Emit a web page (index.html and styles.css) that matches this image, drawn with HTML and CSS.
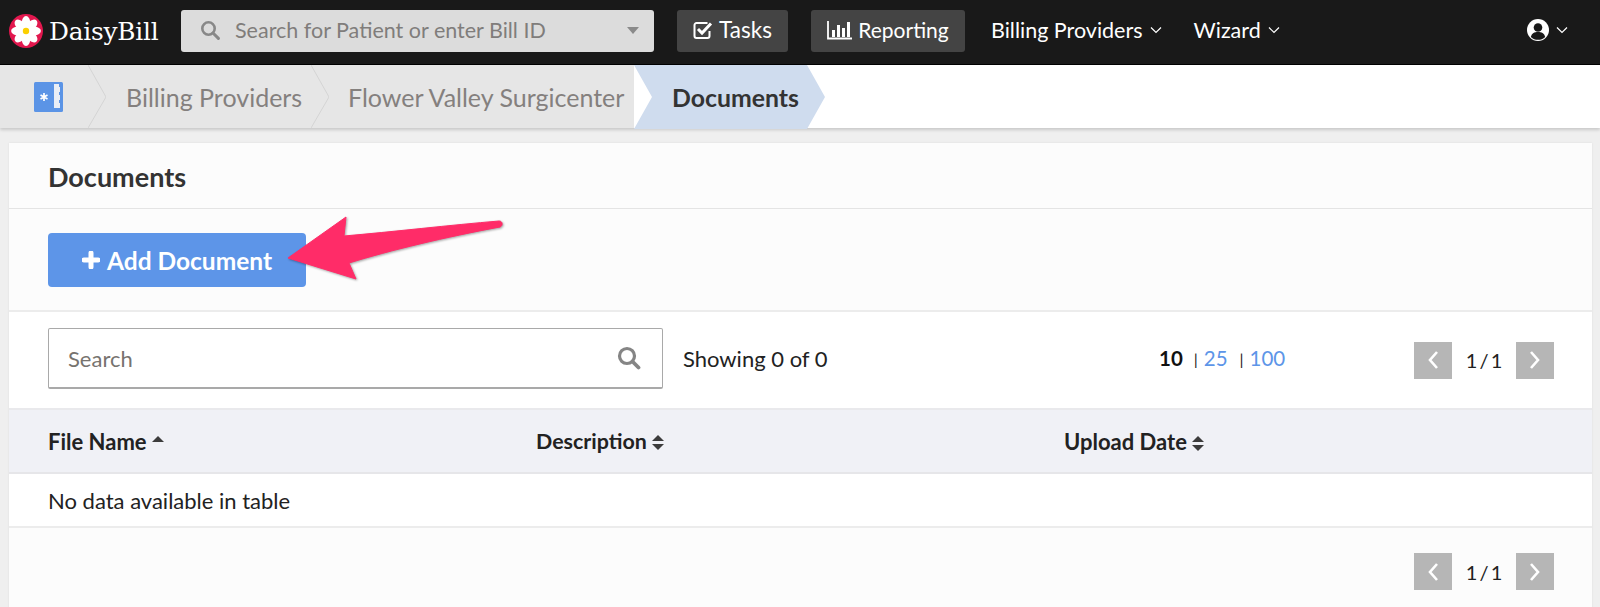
FILE: index.html
```html
<!DOCTYPE html>
<html lang="en">
<head>
    <meta charset="UTF-8">
    <meta name="viewport" content="width=device-width, initial-scale=1.0">
    <title>DaisyBill - Documents</title>
    <link rel="stylesheet" href="styles.css">
</head>
<body>
    <nav class="navbar">
        <a class="brand">
            <svg class="brand-logo" viewBox="0 0 34 34" width="34" height="34">
                <circle cx="17" cy="17" r="17" fill="#e2174e"/>
                <g fill="#fff">
                    <ellipse cx="17" cy="8.5" rx="4.2" ry="6.4"/>
                    <ellipse cx="17" cy="8.5" rx="4.2" ry="6.4" transform="rotate(45 17 17)"/>
                    <ellipse cx="17" cy="8.5" rx="4.2" ry="6.4" transform="rotate(90 17 17)"/>
                    <ellipse cx="17" cy="8.5" rx="4.2" ry="6.4" transform="rotate(135 17 17)"/>
                    <ellipse cx="17" cy="8.5" rx="4.2" ry="6.4" transform="rotate(180 17 17)"/>
                    <ellipse cx="17" cy="8.5" rx="4.2" ry="6.4" transform="rotate(225 17 17)"/>
                    <ellipse cx="17" cy="8.5" rx="4.2" ry="6.4" transform="rotate(270 17 17)"/>
                    <ellipse cx="17" cy="8.5" rx="4.2" ry="6.4" transform="rotate(315 17 17)"/>
                </g>
                <circle cx="17" cy="17" r="3.2" fill="#fbd000"/>
            </svg>
            <span class="brand-name">DaisyBill</span>
        </a>
        <div class="nav-search">
            <svg class="nav-search-icon" viewBox="0 0 20 20" width="20" height="20">
                <circle cx="8.5" cy="8.5" r="6.2" fill="none" stroke="#888" stroke-width="2.6"/>
                <path d="M13 13l5.4 5.4" stroke="#888" stroke-width="3" stroke-linecap="round"/>
            </svg>
            <span class="nav-search-text">Search for Patient or enter Bill ID</span>
            <span class="nav-search-caret"></span>
        </div>
        <a class="nav-btn nav-btn-tasks">
            <svg viewBox="0 0 20 20" width="20" height="20">
                <path d="M16.500 11v5a2 2 0 0 1-2 2h-11a2 2 0 0 1-2-2V5a2 2 0 0 1 2-2h11" fill="none" stroke="#fff" stroke-width="2"/>
                <path d="M5 9l4 4L18 3.500" fill="none" stroke="#fff" stroke-width="3"/>
            </svg>
            Tasks
        </a>
        <a class="nav-btn nav-btn-reporting">
            <svg viewBox="0 0 25 20" width="25" height="20">
                <path d="M1 1v17.500h24" fill="none" stroke="#fff" stroke-width="1.800"/>
                <path d="M5 10h3v7H5zM10 5h3v12h-3zM15 8h3v9h-3zM20 2h3v15h-3z" fill="#fff"/>
            </svg>
            Reporting
        </a>
        <a class="nav-link nav-link-providers">Billing Providers
            <svg class="chev" viewBox="0 0 12 8" width="12" height="8"><path d="M1 1.500l5 5 5-5" fill="none" stroke="#fff" stroke-width="1.200"/></svg>
        </a>
        <a class="nav-link">Wizard
            <svg class="chev" viewBox="0 0 12 8" width="12" height="8"><path d="M1 1.500l5 5 5-5" fill="none" stroke="#fff" stroke-width="1.200"/></svg>
        </a>
        <a class="nav-user">
            <svg viewBox="0 0 22 22" width="22" height="22">
                <circle cx="11" cy="11" r="11" fill="#fff"/>
                <circle cx="11" cy="8.500" r="4.300" fill="#191919"/>
                <path d="M3.800 18c1-4 3.600-5 7.200-5s6.200 1 7.200 5c-2 2-4.500 2.800-7.200 2.800S5.800 20 3.800 18z" fill="#191919"/>
            </svg>
            <svg class="chev" viewBox="0 0 12 8" width="12" height="8"><path d="M1 1.500l5 5 5-5" fill="none" stroke="#fff" stroke-width="1.200"/></svg>
        </a>
    </nav>

    <div class="crumbs">
        <div class="crumb-trail">
            <a class="crumb-home">
                <svg viewBox="0 0 29 30" width="29" height="30">
                    <rect width="29" height="30" rx="1.500" fill="#5b94e6"/>
                    <path d="M20 2h5v3h1v5h-1v3h1v5h-1v3h1v5h-6z" fill="#e9eef6"/>
                    <path d="M10 11v8M6.500 13l7 4M13.500 13l-7 4" stroke="#fff" stroke-width="1.700"/>
                </svg>
            </a>
            <svg class="crumb-sep" viewBox="0 0 18 63" width="18" height="63"><path d="M0 0l18 32L0 63" fill="none" stroke="#d4d4d4"/></svg>
            <a class="crumb crumb-providers">Billing Providers</a>
            <svg class="crumb-sep" viewBox="0 0 18 63" width="18" height="63"><path d="M0 0l18 32L0 63" fill="none" stroke="#d4d4d4"/></svg>
            <a class="crumb crumb-center">Flower Valley Surgicenter</a>
        </div>
        <a class="crumb-current">Documents</a>
    </div>

    <main class="card">
        <h2 class="card-title">Documents</h2>
        <div class="card-actions">
            <button class="add-btn">
                <svg viewBox="0 0 18 18" width="18" height="18"><path d="M9 2v14M2 9h14" stroke="#fff" stroke-width="5" stroke-linecap="round"/></svg>
                Add Document
            </button>
        </div>
        <div class="table-tools">
            <div class="table-search">
                <span class="table-search-text">Search</span>
                <svg viewBox="0 0 24 24" width="24" height="24">
                    <circle cx="10" cy="10" r="7.500" fill="none" stroke="#858585" stroke-width="3.200"/>
                    <path d="M15.500 15.500l6 6" stroke="#858585" stroke-width="3.800" stroke-linecap="round"/>
                </svg>
            </div>
            <div class="table-count">Showing 0 of 0</div>
            <div class="page-sizes">
                <b>10</b><i class="first">|</i><a>25</a><i>|</i><a>100</a>
            </div>
            <div class="pager">
                <span class="pager-btn"><svg viewBox="0 0 12 20" width="12" height="20"><path d="M10 2l-7 8 7 8" fill="none" stroke="#fff" stroke-width="2.600"/></svg></span>
                <span class="pager-text">1 / 1</span>
                <span class="pager-btn"><svg viewBox="0 0 12 20" width="12" height="20"><path d="M2 2l7 8-7 8" fill="none" stroke="#fff" stroke-width="2.600"/></svg></span>
            </div>
        </div>
        <table class="doc-table">
            <thead>
                <tr>
                    <th class="col-file">File Name <span class="sort-up"></span></th>
                    <th class="col-desc">Description <span class="sort-both"></span></th>
                    <th>Upload Date <span class="sort-both"></span></th>
                </tr>
            </thead>
            <tbody>
                <tr><td colspan="3">No data available in table</td></tr>
            </tbody>
        </table>
        <div class="table-foot">
            <div class="pager">
                <span class="pager-btn"><svg viewBox="0 0 12 20" width="12" height="20"><path d="M10 2l-7 8 7 8" fill="none" stroke="#fff" stroke-width="2.600"/></svg></span>
                <span class="pager-text">1 / 1</span>
                <span class="pager-btn"><svg viewBox="0 0 12 20" width="12" height="20"><path d="M2 2l7 8-7 8" fill="none" stroke="#fff" stroke-width="2.600"/></svg></span>
            </div>
        </div>
    </main>

    <!-- annotation arrow drawn on top of the screenshot -->
    <svg class="arrow" viewBox="0 0 230 70" width="230" height="70">
        <path d="M7 44L65 3L63 22C110 18 170 11 218 7C222 7 222 12 219 13C165 23 110 36 68 49L75 65z" fill="#ff2c68" stroke="#ff2c68" stroke-width="1" stroke-linejoin="round"/>
    </svg>
</body>
</html>
```

FILE: styles.css
```css
* {
    margin: 0;
    padding: 0;
    box-sizing: border-box;
}

html, body {
    height: 100%;
    overflow: hidden;
}

body {
    position: relative;
    font-family: 'Lato', sans-serif;
    font-size: 21.500px;
    color: #222;
    background: #efefef;
}

/* Top bar */
.navbar {
    display: flex;
    align-items: center;
    height: 65px;
    background: #191919;
    border-bottom: 1px solid #000;
    color: #fff;
}

.brand {
    display: flex;
    align-items: center;
    width: 181px;
    padding-left: 9px;
    margin-bottom: 2px;
}

.brand-logo {
    flex: none;
}

.brand-name {
    margin-left: 6px;
    font-family: 'DejaVu Serif', serif;
    font-size: 24.800px;
    letter-spacing: -0.200px;
}

.nav-search {
    display: flex;
    align-items: center;
    width: 473px;
    height: 42px;
    margin-bottom: 2px;
    padding: 0 15px 2px 19px;
    border-radius: 3px;
    background: #dcdcdc;
    color: #807d7b;
}

.nav-search-text {
    margin-left: 15px;
    flex: 1;
}

.nav-search-caret {
    border-top: 7px solid #8a8a8a;
    border-left: 6.500px solid transparent;
    border-right: 6.500px solid transparent;
}

.nav-btn {
    display: flex;
    align-items: center;
    justify-content: center;
    gap: 6px;
    height: 42px;
    margin-bottom: 3px;
    padding-bottom: 2px;
    border-radius: 3px;
    background: #444;
}

.nav-btn-tasks {
    width: 111px;
    margin-left: 23px;
    font-size: 22.500px;
}

.nav-btn-reporting {
    width: 154px;
    margin-left: 23px;
    font-size: 21px;
}

.nav-link {
    display: flex;
    align-items: center;
    gap: 7px;
    margin-left: 26px;
    padding-bottom: 4px;
}

.nav-link-providers + .nav-link {
    margin-left: 32px;
}

.nav-user {
    display: flex;
    align-items: center;
    gap: 7px;
    margin-left: auto;
    margin-right: 32px;
    padding-bottom: 4px;
}

/* Breadcrumbs */
.crumbs {
    display: flex;
    height: 63px;
    background: #fff;
    box-shadow: 0 2px 3px rgba(0, 0, 0, 0.16);
}

.crumb-trail {
    display: flex;
    align-items: center;
    width: 634px;
    background: #e6e6e6;
    color: #84807e;
}

.crumb-home {
    display: flex;
    width: 88px;
    padding-left: 34px;
}

.crumb {
    font-size: 25px;
}

.crumb-providers {
    width: 205px;
    padding-left: 20px;
}

.crumb-center {
    padding-left: 19px;
}

.crumb-current {
    display: flex;
    align-items: center;
    width: 191px;
    height: 64px;
    padding-left: 38px;
    font-size: 24.800px;
    font-weight: 700;
    color: #333;
    background: #cfdcee;
    clip-path: polygon(0 0, 173px 0, 100% 50%, 173px 100%, 0 100%, 18px 50%);
}

/* Card */
.card {
    margin: 15px 8px 0 9px;
    height: 480px;
    background: #fcfcfc;
    box-shadow: 0 0 2px rgba(0, 0, 0, 0.08);
}

.card-title {
    height: 66px;
    padding: 17px 39px 0;
    font-size: 27px;
    font-weight: 700;
    color: #333;
    border-bottom: 1px solid #e4e4e4;
}

.card-actions {
    height: 103px;
    padding: 24px 39px 0;
    border-bottom: 2px solid #ececec;
}

.add-btn {
    display: flex;
    align-items: center;
    justify-content: center;
    gap: 7px;
    width: 258px;
    height: 54px;
    border: none;
    border-radius: 4px;
    background: #5d95e8;
    color: #fff;
    font-family: inherit;
    font-size: 24.500px;
    font-weight: 700;
}

.table-tools {
    display: flex;
    align-items: center;
    height: 96px;
    padding: 0 38px 0 39px;
    background: #fff;
    font-size: 22px;
}

.table-search {
    display: flex;
    align-items: center;
    justify-content: space-between;
    width: 615px;
    height: 61px;
    margin-bottom: 3px;
    padding: 0 21px 0 19px;
    border: 1px solid #a9a9a9;
    border-radius: 2px;
    border-bottom-width: 2px;
    color: #77736f;
}

.table-count {
    width: 476px;
    margin: 0 0 4px 20px;
    color: #222;
}

.page-sizes {
    display: flex;
    align-items: center;
    width: 254px;
    margin-bottom: 4px;
    font-size: 20.500px;
}

.page-sizes b {
    font-weight: 700;
    color: #111;
}

.page-sizes a {
    color: #5d95e8;
}

.page-sizes i {
    margin: 0 6px 0 12px;
    font-size: 16px;
    font-style: normal;
}

.page-sizes i.first {
    margin-left: 11px;
}

.pager {
    display: flex;
    align-items: center;
    margin-left: auto;
}

.pager-btn {
    display: flex;
    align-items: center;
    justify-content: center;
    width: 38px;
    height: 37px;
    background: #b6b6b6;
}

.pager-text {
    width: 64px;
    text-align: center;
    font-size: 20px;
    word-spacing: -3px;
    color: #222;
}

/* Table */
.doc-table {
    width: 100%;
    border-collapse: collapse;
    table-layout: fixed;
    background: #fff;
    text-align: left;
}

.doc-table th {
    height: 64px;
    font-size: 22px;
    font-weight: 700;
    color: #222;
    background: #f0f1f6;
    border-top: 2px solid #e9e9ec;
    border-bottom: 2px solid #e6e6e9;
}

.doc-table td {
    height: 54px;
    padding-left: 39px;
    font-size: 22px;
    color: #222;
    border-bottom: 2px solid #ececec;
}

.doc-table th.col-file {
    width: 527px;
    padding-left: 39px;
}

.doc-table th.col-desc {
    width: 528px;
    font-size: 21.400px;
}

.sort-up, .sort-both {
    display: inline-block;
    position: relative;
    width: 13px;
    height: 15px;
    margin-left: 0;
    vertical-align: -1px;
}

.sort-up::before, .sort-both::before, .sort-both::after {
    content: "";
    position: absolute;
    left: 0;
    border-left: 6.500px solid transparent;
    border-right: 6.500px solid transparent;
}

.sort-up::before, .sort-both::before {
    top: 0;
    border-bottom: 6.500px solid #3c3c3c;
}

.sort-both::after {
    bottom: 0;
    border-top: 6.500px solid #3c3c3c;
}

.table-foot {
    display: flex;
    padding: 25px 38px 0 39px;
}

/* Annotation */
.arrow {
    position: absolute;
    left: 281px;
    top: 214px;
    filter: drop-shadow(1px 1px 1px rgba(0, 0, 0, 0.35));
}
```
